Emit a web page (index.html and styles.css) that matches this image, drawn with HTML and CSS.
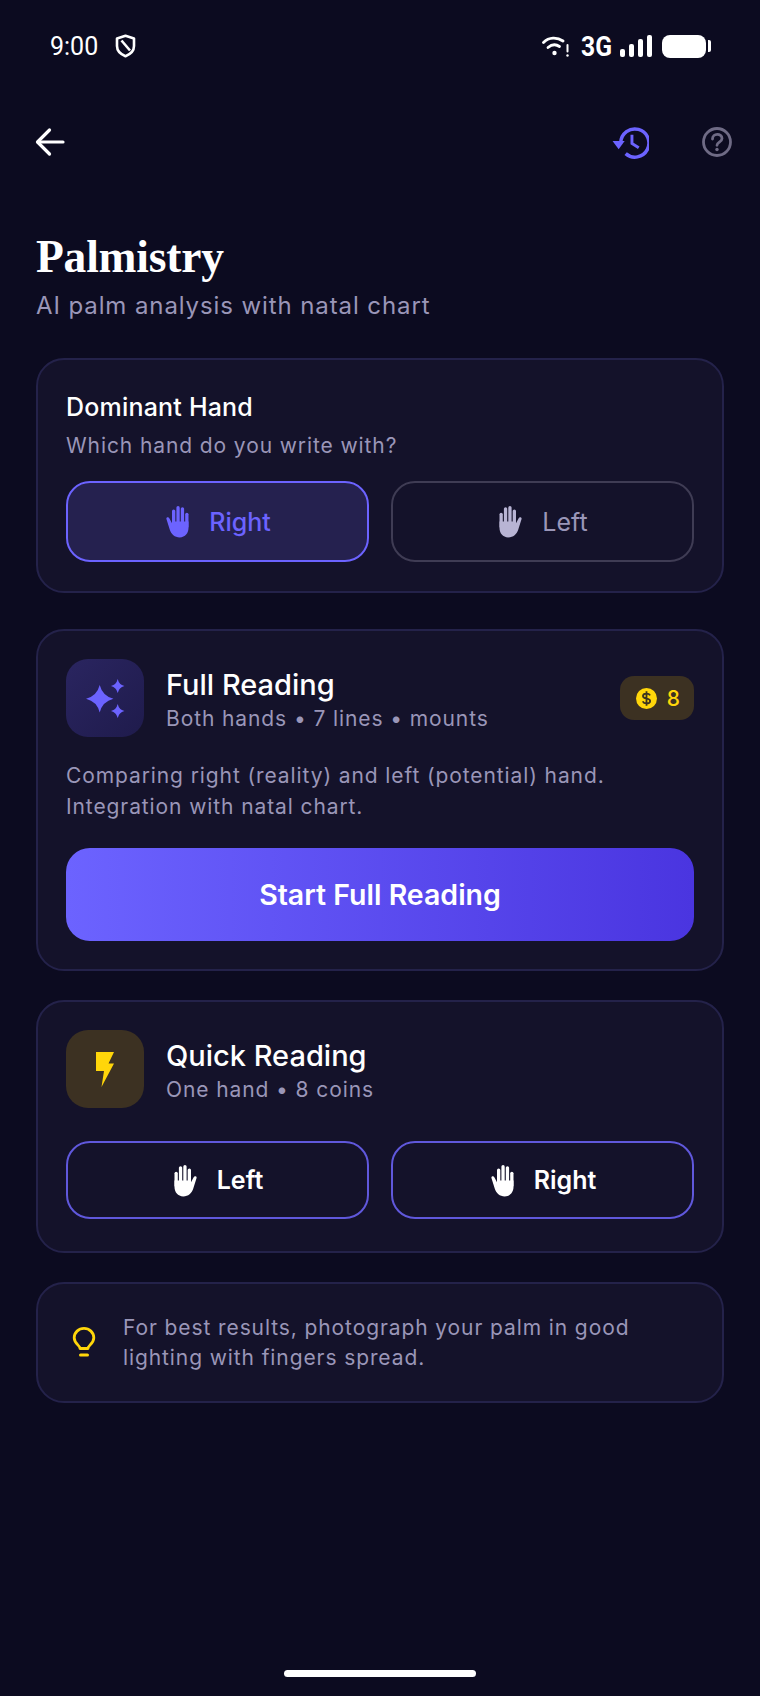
FILE: index.html
```html
<!DOCTYPE html>
<html lang="en">
<head>
    <meta charset="UTF-8">
    <title>Palmistry</title>
    <link rel="stylesheet" href="styles.css">
</head>
<body>
    <svg class="defs" width="0" height="0">
        <symbol id="hand" viewBox="3.500 0 21 30">
            <rect x="4" y="7" width="3" height="14" rx="1.5"/>
            <rect x="8" y="2" width="3" height="16" rx="1.5"/>
            <rect x="12" y="1" width="3" height="17" rx="1.5"/>
            <rect x="16" y="4" width="3" height="14" rx="1.5"/>
            <path d="M4 15h15v1.500l2.300-4.300c.5-.9 1.500-1.300 2.300-.8.5.3.6.9.4 1.500l-3 9.600C19.800 26.500 16.500 29.500 12 29.500 7 29.500 4 25.500 4 21z"/>
        </symbol>
    </svg>

    <div class="screen">
        <div class="status-bar">
            <div class="status-left">
                <span class="clock">9:00</span>
                <svg class="shield" viewBox="0 0 20 24" fill="none" stroke="#fff" stroke-width="2.600" stroke-linejoin="round">
                    <path d="M10 1.800 18.500 4.500V12c0 4.800-3.500 8.200-8.500 10.200C5 20.200 1.500 16.800 1.500 12V4.500z"/>
                    <path d="M6 6.500 14.500 16.500"/>
                </svg>
            </div>
            <div class="status-right">
                <svg class="wifi" viewBox="0 0 27 21" fill="none" stroke="#fff" stroke-width="2.800" stroke-linecap="round">
                    <path d="M1.500 6.500C7 1 15 1 21 5"/>
                    <path d="M6 11.500C10 8 14 8 17.500 10.500"/>
                    <circle cx="12.500" cy="17" r="2.200" fill="#fff" stroke="none"/>
                    <path d="M25.500 9v6.500" stroke-width="2"/>
                    <circle cx="25.500" cy="19.500" r="1.200" fill="#fff" stroke="none"/>
                </svg>
                <span class="net">3G</span>
                <div class="signal">
                    <i class="bar-1"></i><i class="bar-2"></i><i class="bar-3"></i><i class="bar-4"></i>
                </div>
                <div class="battery"><div class="battery-body"></div><div class="battery-tip"></div></div>
            </div>
        </div>

        <div class="toolbar">
            <svg class="back" viewBox="0 0 30 30" fill="none" stroke="#fff" stroke-width="3.200" stroke-linecap="round" stroke-linejoin="round">
                <path d="M28 15H3"/>
                <path d="M14.500 3 2.500 15l12 12"/>
            </svg>
            <div class="toolbar-actions">
                <svg class="history" viewBox="0 0 38 34" fill="none" stroke="#6c63ff" stroke-width="3.600">
                    <path d="M9 17a14.500 14.500 0 1 1 5 11.500"/>
                    <path d="M0.500 15.500H13L6.800 24z" fill="#6c63ff" stroke="none"/>
                    <path d="M20.500 9v9l7 4.500" stroke-width="3"/>
                </svg>
                <svg class="help" viewBox="0 0 30 30" fill="none" stroke="#6f6b85" stroke-width="2.800" stroke-linecap="round">
                    <circle cx="15" cy="15" r="13.500"/>
                    <path d="M10.500 12c0-6 9.500-6 9.500-.5 0 3.500-5 3.800-5 6.800"/>
                    <circle cx="15" cy="22.500" r="1.700" fill="#6f6b85" stroke="none"/>
                </svg>
            </div>
        </div>

        <h1 class="title">Palmistry</h1>
        <p class="subtitle">AI palm analysis with natal chart</p>

        <div class="card hand-card">
            <div class="card-label">Dominant Hand</div>
            <div class="card-hint">Which hand do you write with?</div>
            <div class="btn-row">
                <button class="hand-btn selected"><svg class="hand-icon flip"><use href="#hand"/></svg><span>Right</span></button>
                <button class="hand-btn muted"><svg class="hand-icon"><use href="#hand"/></svg><span>Left</span></button>
            </div>
        </div>

        <div class="card full-card">
            <div class="reading-head">
                <div class="icon-box purple">
                    <svg class="sparkle" viewBox="0 0 39 39" fill="#6c63ff">
                        <path d="M13.700 6Q16.500 17 27.400 19.700 16.500 22.500 13.700 33.400 11 22.500 0 19.700 11 17 13.700 6z"/>
                        <path d="M31.700 0Q33 5.700 38.400 7 33 8.300 31.700 14 30.400 8.300 25 7 30.400 5.700 31.700 0z"/>
                        <path d="M31.700 25Q33 30.700 38.400 32 33 33.300 31.700 39 30.400 33.300 25 32 30.400 30.700 31.700 25z"/>
                    </svg>
                </div>
                <div class="reading-text">
                    <div class="reading-name">Full Reading</div>
                    <div class="reading-meta">Both hands • 7 lines • mounts</div>
                </div>
                <div class="price">
                    <svg class="coin" viewBox="0 0 22 22">
                        <circle cx="11" cy="11" r="11" fill="#ffd60a"/>
                        <path d="M14.800 7.800C14 6.300 12.500 5.800 11 5.800 9 5.800 7.300 6.800 7.300 8.500c0 3.800 7.500 1.500 7.500 5 0 1.800-1.800 2.700-3.800 2.700-1.700 0-3.200-.7-4-2.200M11 3.500v15" fill="none" stroke="#3a3220" stroke-width="1.900"/>
                    </svg>
                    <span>8</span>
                </div>
            </div>
            <p class="reading-desc">Comparing right (reality) and left (potential) hand.<br>Integration with natal chart.</p>
            <button class="start-btn">Start Full Reading</button>
        </div>

        <div class="card quick-card">
            <div class="reading-head">
                <div class="icon-box amber">
                    <svg class="bolt" viewBox="0 0 18 36" fill="#ffd60a">
                        <path d="M0 1H18L12.500 12.500H18L5.500 36 8 20H0z"/>
                    </svg>
                </div>
                <div class="reading-text">
                    <div class="reading-name">Quick Reading</div>
                    <div class="reading-meta">One hand • 8 coins</div>
                </div>
            </div>
            <div class="btn-row">
                <button class="hand-btn outline"><svg class="hand-icon"><use href="#hand"/></svg><span>Left</span></button>
                <button class="hand-btn outline"><svg class="hand-icon flip"><use href="#hand"/></svg><span>Right</span></button>
            </div>
        </div>

        <div class="card tip-card">
            <svg class="bulb" viewBox="0 0 24 32" fill="none" stroke="#ffd60a" stroke-width="2.800" stroke-linecap="round" stroke-linejoin="round">
                <path d="M8 21.500c0-3-5.800-5-5.800-10.800a9.800 9.300 0 0 1 19.600 0C21.800 16.500 16 18.500 16 21.500z"/>
                <path d="M8.500 28h7" stroke-width="3"/>
            </svg>
            <p class="tip-text">For best results, photograph your palm in good<br>lighting with fingers spread.</p>
        </div>

        <div class="home-indicator"></div>
    </div>
</body>
</html>
```

FILE: styles.css
```css
* {
    box-sizing: border-box;
}
body {
    margin: 0;
    background: #0c0b20;
    color: #fff;
    font-family: Inter, 'Noto Sans', sans-serif;
}
.defs {
    display: block;
    height: 0;
}
.screen {
    display: flex;
    flex-direction: column;
    min-height: 1696px;
    padding: 0 36px;
}

/* status bar */
.status-bar {
    display: flex;
    justify-content: space-between;
    align-items: center;
    height: 46px;
    margin-top: 23px;
    padding: 0 14px;
}
.status-left {
    display: flex;
    align-items: center;
    gap: 17px;
}
.clock {
    font-family: Roboto, sans-serif;
    font-size: 25px;
}
.shield {
    width: 21px;
    height: 24px;
}
.status-right {
    display: flex;
    align-items: center;
    margin-right: -1px;
}
.wifi {
    width: 27px;
    height: 21px;
}
.net {
    margin-left: 12px;
    width: 30px;
    font-family: Roboto, sans-serif;
    font-size: 28px;
    font-weight: 700;
    transform: scaleX(0.88);
    transform-origin: left center;
}
.signal {
    display: flex;
    align-items: flex-end;
    gap: 4px;
    height: 22px;
    margin-left: 9px;
}
.signal i {
    display: block;
    width: 5px;
    background: #fff;
    border-radius: 2px;
}
.bar-1 { height: 8px; }
.bar-2 { height: 13px; }
.bar-3 { height: 18px; }
.bar-4 { height: 22px; }
.battery {
    display: flex;
    align-items: center;
    gap: 2px;
    margin-left: 10px;
}
.battery-body {
    width: 44px;
    height: 23px;
    background: #fff;
    border-radius: 8px;
}
.battery-tip {
    width: 3px;
    height: 12px;
    background: #fff;
    border-radius: 0 2px 2px 0;
}

/* toolbar */
.toolbar {
    display: flex;
    justify-content: space-between;
    align-items: center;
    height: 36px;
    margin-top: 55px;
}
.back {
    width: 30px;
    height: 30px;
    margin-left: -1px;
}
.toolbar-actions {
    display: flex;
    align-items: center;
    gap: 53px;
    margin-right: -8px;
}
.history {
    width: 37px;
    height: 33px;
}
.help {
    width: 30px;
    height: 30px;
}

.title {
    margin: 68px 0 0;
    font-family: 'Liberation Serif', serif;
    font-size: 45.500px;
    line-height: 58px;
    font-weight: 700;
    letter-spacing: -0.2px;
}
.subtitle {
    margin: 4px 0 0;
    font-size: 24px;
    line-height: 32px;
    letter-spacing: 0.9px;
    color: #9a96b8;
}

/* cards */
.card {
    background: #14122a;
    border: 2px solid #24224a;
    border-radius: 28px;
    padding: 28px;
}
.hand-card {
    height: 235px;
    margin-top: 36px;
}
.card-label {
    font-size: 25px;
    line-height: 32px;
    font-weight: 500;
    letter-spacing: 0.2px;
    padding-top: 3px;
}
.card-hint {
    margin-top: 9px;
    font-size: 21px;
    line-height: 28px;
    letter-spacing: 0.9px;
    color: #9a96b8;
}
.btn-row {
    display: flex;
    gap: 22px;
}
.hand-card .btn-row {
    margin-top: 21px;
}
.hand-btn {
    flex: 1;
    display: flex;
    align-items: center;
    justify-content: center;
    gap: 18px;
    border-radius: 24px;
    background: transparent;
    font-family: Inter, sans-serif;
    font-size: 25px;
    height: 81px;
}
.hand-btn.selected {
    border: 2px solid #6c63ff;
    background: #25214f;
    color: #6c63ff;
    font-weight: 500;
}
.hand-btn.muted {
    border: 2px solid #3f3c54;
    color: #b8b4d4;
    font-weight: 400;
}
.hand-btn.muted span {
    color: #9a96b8;
}
.hand-btn.outline {
    height: 78px;
    border: 2px solid #6058dc;
    color: #fff;
    font-weight: 600;
}
.hand-icon {
    width: 27px;
    height: 33px;
    fill: currentColor;
}
.flip {
    transform: scaleX(-1);
}

.full-card {
    height: 342px;
    margin-top: 36px;
}
.quick-card {
    height: 253px;
    margin-top: 29px;
}
.reading-head {
    display: flex;
    align-items: center;
    gap: 22px;
}
.icon-box {
    flex: none;
    display: flex;
    align-items: center;
    justify-content: center;
    width: 78px;
    height: 78px;
    border-radius: 22px;
}
.icon-box.purple {
    background: linear-gradient(135deg, #2a2560, #1f1b4c);
}
.icon-box.amber {
    background: #3c3122;
}
.sparkle {
    width: 39px;
    height: 39px;
}
.bolt {
    width: 18px;
    height: 36px;
}
.reading-text {
    flex: 1;
    padding-top: 3px;
}
.reading-name {
    font-size: 29px;
    line-height: 36px;
    font-weight: 500;
}
.reading-meta {
    margin-top: 2px;
    font-size: 21px;
    line-height: 28px;
    letter-spacing: 0.9px;
    color: #9a96b8;
}
.price {
    display: flex;
    align-items: center;
    gap: 10px;
    height: 44px;
    padding: 0 14px 0 16px;
    border-radius: 14px;
    background: #3c3122;
    color: #ffd60a;
    font-size: 21px;
    font-weight: 500;
}
.coin {
    width: 21px;
    height: 21px;
}
.reading-desc {
    margin: 23px 0 0;
    font-size: 21px;
    line-height: 31px;
    letter-spacing: 0.9px;
    color: #9a96b8;
}
.start-btn {
    display: block;
    width: 100%;
    height: 93px;
    margin-top: 26px;
    border: none;
    border-radius: 24px;
    background: linear-gradient(90deg, #6c63ff, #4a35e0);
    color: #fff;
    font-family: Inter, sans-serif;
    font-size: 28.500px;
    font-weight: 600;
}
.quick-card .btn-row {
    margin-top: 33px;
}

.tip-card {
    display: flex;
    align-items: center;
    gap: 27px;
    height: 121px;
    margin-top: 29px;
    padding: 0 28px 0 34px;
}
.bulb {
    flex: none;
    width: 24px;
    height: 32px;
}
.tip-text {
    margin: 0;
    font-size: 21px;
    line-height: 30px;
    letter-spacing: 0.9px;
    color: #9a96b8;
}

.home-indicator {
    width: 192px;
    height: 7px;
    margin: auto auto 19px;
    border-radius: 4px;
    background: #fff;
}
```
